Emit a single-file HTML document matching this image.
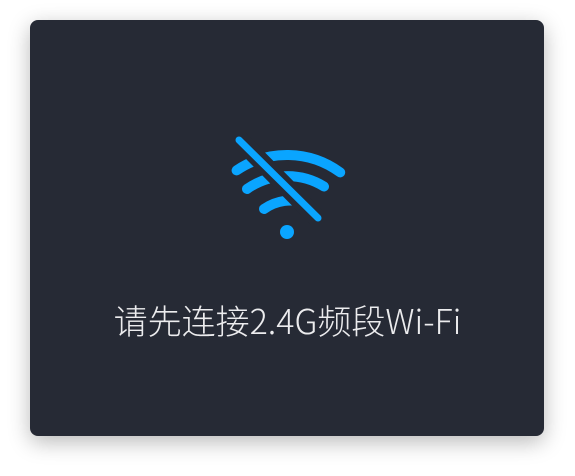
<!DOCTYPE html>
<html><head><meta charset="utf-8"><style>
html,body{margin:0;padding:0;background:#fff;width:575px;height:476px;overflow:hidden}
.card{position:absolute;left:30px;top:20px;width:514px;height:416px;background:#262a35;border-radius:8px;box-shadow:0 6px 22px rgba(0,0,0,0.28)}
.t{position:absolute;left:0;width:575px;top:298px;text-align:center;color:#ececee;font-size:34px;line-height:44px;font-weight:300;font-family:"Noto Sans CJK SC","Liberation Sans",sans-serif;white-space:nowrap}
svg{position:absolute;left:0;top:0}
</style></head><body>
<div class="card"></div>
<svg width="575" height="476">
<g fill="none" stroke="#0aa5ff" stroke-width="10" stroke-linecap="round">
<path d="M236.6 170.4 A90 90 0 0 1 340.2 172.4"/>
<path d="M247 189 A70 70 0 0 1 324 186.5"/>
<path d="M264 209 A46 46 0 0 1 306 203.1"/>
</g>
<line x1="239" y1="139" x2="318" y2="219" stroke="#262a35" stroke-width="18" stroke-linecap="butt"/>
<line x1="239" y1="140" x2="318" y2="218" stroke="#0aa5ff" stroke-width="7" stroke-linecap="round"/>
<circle cx="287" cy="232" r="7" fill="#0aa5ff"/>
</svg>
<div class="t">请先连接2.4G频段Wi-Fi</div>
</body></html>
